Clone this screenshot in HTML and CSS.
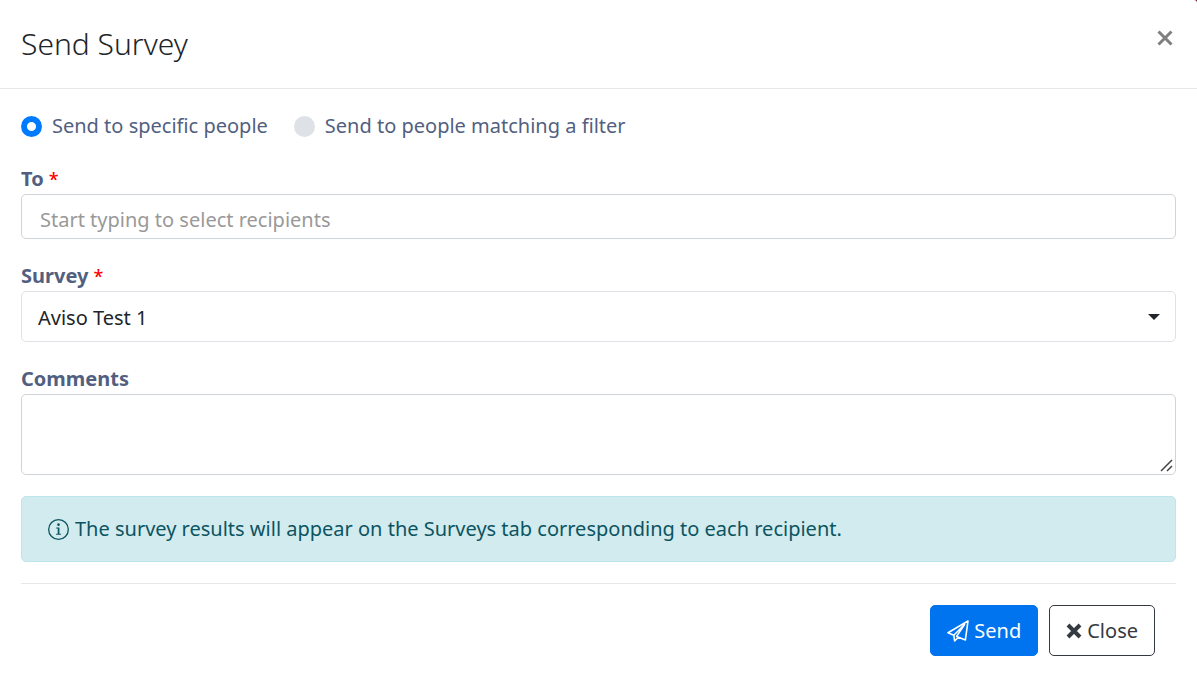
FILE: index.html
```html
<!DOCTYPE html>
<html lang="en">

<head>
  <meta charset="UTF-8">
  <meta name="viewport" content="width=device-width, initial-scale=1.0">
  <title>Send Survey</title>
  <link rel="stylesheet" href="styles.css">
</head>

<body>
  <div class="modal" role="dialog" aria-labelledby="modal-title">
    <header class="modal-header">
      <h1 class="modal-title" id="modal-title">Send Survey</h1>
      <button class="btn-dismiss" type="button" aria-label="Dismiss">
        <svg width="16" height="16" viewBox="0 0 16 16" fill="none" stroke="currentColor" stroke-width="3">
          <path d="M1.5 1.5 14.5 14.5M14.5 1.5 1.5 14.5" />
        </svg>
      </button>
    </header>
    <form class="modal-body">
      <div class="radios">
        <label class="radio"><input type="radio" name="mode" value="people" checked>Send to specific people</label>
        <label class="radio"><input type="radio" name="mode" value="filter">Send to people matching a filter</label>
      </div>
      <div class="field">
        <label for="to">To <span class="required">*</span></label>
        <input class="control control-to" type="text" id="to" placeholder="Start typing to select recipients">
      </div>
      <div class="field">
        <label for="survey">Survey <span class="required">*</span></label>
        <div class="select">
          <select class="control control-select" id="survey">
            <option>Aviso Test 1</option>
          </select>
        </div>
      </div>
      <div class="field">
        <label for="comments">Comments</label>
        <textarea class="control control-area" id="comments"></textarea>
      </div>
      <div class="alert">
        <svg width="21" height="21" viewBox="0 0 16 16" fill="currentColor">
          <path d="M8 15A7 7 0 1 1 8 1a7 7 0 0 1 0 14zm0 1A8 8 0 1 0 8 0a8 8 0 0 0 0 16z" />
          <circle cx="8" cy="4.3" r="1" />
          <path d="M6.2 6.5h2.5v4.7h1.2v.8H6.2v-.8h1.2V7.3H6.2z" />
        </svg>
        <span>The survey results will appear on the Surveys tab corresponding to each recipient.</span>
      </div>
      <footer class="modal-footer">
        <button class="btn btn-primary" type="submit">
          <svg width="22" height="22" viewBox="0 0 22 22" fill="none" stroke="currentColor" stroke-width="1.6" stroke-linejoin="round">
            <path d="M21 1 1 12.7 6.8 15.2 17.5 4.5 9.6 16.4 18.4 19.9zM6.8 15.2 7.6 21 11.5 17.2" />
          </svg>
          Send
        </button>
        <button class="btn btn-outline" type="button">
          <svg width="16" height="16" viewBox="0 0 16 16" fill="none" stroke="currentColor" stroke-width="4">
            <path d="M2 2 14 14M14 2 2 14" />
          </svg>
          Close
        </button>
      </footer>
    </form>
  </div>
</body>

</html>
```
FILE: styles.css
```css
*,
*::before,
*::after {
  box-sizing: border-box;
}

body {
  margin: 0;
  background-color: #6b1230;
  color: #212529;
  font-family: "Noto Sans", sans-serif;
  font-size: 20px;
  line-height: 32px;
}

button,
input,
select,
textarea {
  font: inherit;
}

.modal {
  min-height: 100vh;
  background-color: #fff;
  border-top-right-radius: 3px;
}

.modal-header {
  display: flex;
  justify-content: space-between;
  align-items: flex-start;
  padding: 21px;
  border-bottom: 1px solid #e5e7e9;
}

.modal-title {
  margin: 0;
  font-size: 30px;
  font-weight: 300;
  line-height: 46px;
}

.btn-dismiss {
  display: flex;
  padding: 9px 3px;
  border: 0;
  background: none;
  color: #7f7f7f;
}

.modal-body {
  display: flex;
  flex-direction: column;
  gap: 21px;
  padding: 21px;
}

.radios {
  display: flex;
  gap: 26px;
}

.radio {
  display: flex;
  align-items: center;
  gap: 10px;
  color: #525f7f;
}

.radio input {
  appearance: none;
  width: 21px;
  height: 21px;
  margin: 0;
  border-radius: 50%;
  background-color: #dee2e6;
}

.radio input:checked {
  background: radial-gradient(circle, #fff 4px, #007bff 5px);
}

.field {
  display: flex;
  flex-direction: column;
}

.field > label {
  color: #525f7f;
  font-weight: 700;
  line-height: 31px;
}

.required {
  color: #f00;
  font-size: 18px;
  font-weight: 500;
  line-height: 1;
}

.control {
  width: 100%;
  border: 1px solid #ced4da;
  border-radius: 5px;
  background-color: #fff;
  color: #212529;
}

.control-to {
  height: 45px;
  padding: 5px 18px 0;
}

.control-to::placeholder {
  color: #999;
}

.select {
  display: grid;
  align-items: center;
}

.select::after {
  content: "";
  grid-area: 1 / 1;
  justify-self: end;
  margin-right: 16px;
  border: 6px solid transparent;
  border-top-color: #212529;
  border-bottom: 0;
  pointer-events: none;
}

.control-select {
  grid-area: 1 / 1;
  appearance: none;
  height: 51px;
  padding: 2px 16px 0;
  border-color: #dee2e6;
}

.control-area {
  display: block;
  height: 81px;
  padding: 8px 16px;
  resize: vertical;
}

.control-area::-webkit-resizer {
  background: url("data:image/svg+xml,%3Csvg xmlns='http://www.w3.org/2000/svg' width='15' height='15' fill='none' stroke='%23444' stroke-width='1.5'%3E%3Cpath d='M1 12 12 1M7 12l5-5'/%3E%3C/svg%3E") no-repeat;
}

.alert {
  display: flex;
  align-items: center;
  gap: 6px;
  padding: 16px 26px;
  border: 1px solid #bee5eb;
  border-radius: 5px;
  background-color: #d1ebef;
  color: #0c5460;
}

.modal-footer {
  display: flex;
  justify-content: flex-end;
  gap: 11px;
  padding: 21px 21px 0;
  border-top: 1px solid #e5e7e9;
}

.btn {
  display: flex;
  align-items: center;
  gap: 5px;
  height: 51px;
  padding: 1px 16px 0;
  border: 1px solid #343a40;
  border-radius: 5px;
  background-color: #fff;
  color: #343a40;
}

.btn-primary {
  border-color: #0073ef;
  background-color: #0073ef;
  color: #fff;
}
```
